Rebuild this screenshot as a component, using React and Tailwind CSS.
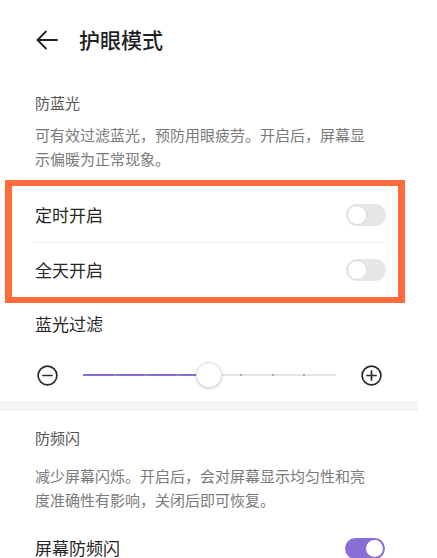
import React from "react";

const font = { fontFamily: '"Noto Sans CJK SC", "Noto Sans", sans-serif' };

function Toggle({ on }) {
  if (on) {
    return (
      <div className="w-[40px] h-[21px] rounded-full bg-[#8a6ed8] flex items-center justify-end pr-[2px]">
        <div className="w-[17px] h-[17px] rounded-full bg-white" />
      </div>
    );
  }
  return (
    <div className="w-[40px] h-[22px] rounded-full bg-[#e6e6e6] flex items-center pl-[1px]">
      <div className="w-[20px] h-[20px] rounded-full bg-white border border-[#dcdcdc]" />
    </div>
  );
}

function Row({ label }) {
  return (
    <div className="flex items-center justify-between h-[54px] pl-[23px] pr-[12px]">
      <span className="text-[17px] text-[#262626]">{label}</span>
      <Toggle />
    </div>
  );
}

export default function App() {
  const ticks = [1, 2, 3, 5, 6, 7];

  return (
    <div className="w-[437px] h-[558px] overflow-hidden bg-white" style={font}>
      <div className="w-[418px]">
        {/* header */}
        <div className="pt-[18px] h-[62px] flex items-center pl-[36px]">
          <svg width="22" height="20" viewBox="0 0 22 20" fill="none" stroke="#222" strokeWidth="1.8" strokeLinecap="round" strokeLinejoin="round">
            <path d="M21 10H1.5" />
            <path d="M10 1.5L1.5 10L10 18.5" />
          </svg>
          <span className="ml-[21px] text-[21px] font-medium text-[#1f1f1f]">护眼模式</span>
        </div>

        {/* 防蓝光 */}
        <div className="px-[35px] mt-[31px]">
          <div className="text-[15px] leading-[20px] text-[#555]">防蓝光</div>
          <div className="mt-[10px] text-[15px] leading-[24px] text-[#7a7a7a]">
            <div>可有效过滤蓝光，预防用眼疲劳。开启后，屏幕显</div>
            <div>示偏暖为正常现象。</div>
          </div>
        </div>

        <div className="mt-[9px] ml-[5px] w-[400px] border-[6px] border-l-[7px] border-r-[7px] border-[#ff6b3b] pt-[2px]">
          <Row label="定时开启" />
          <div className="ml-[21px] mr-[12px] h-px bg-[#ececec]" />
          <Row label="全天开启" />
        </div>

        {/* 蓝光过滤 */}
        <div className="px-[35px] mt-[9px] text-[17px] leading-[24px] text-[#262626]">蓝光过滤</div>

        <div className="mt-[19px] h-[40px] flex items-center pl-[37px]">
          <svg width="21" height="21" viewBox="0 0 21 21" fill="none" stroke="#2a2a2a" strokeWidth="1.7" strokeLinecap="round">
            <circle cx="10.5" cy="10.5" r="9.4" />
            <path d="M6 10.5H15" />
          </svg>
          <div className="relative ml-[25px] w-[253px] h-[26px] flex items-center">
            <div className="w-[126px] h-[2px] bg-[#8a6ed8]" />
            <div className="flex-1 h-[2px] bg-[#e4e4e4]" />
            {ticks.map((t) => (
              <div
                key={t}
                className="absolute top-[12px] w-[2px] h-[2px] rounded-full bg-[#9a9a9a]"
                style={{ left: `${(t * 253) / 8 - 1}px` }}
              />
            ))}
            <div className="absolute left-[113px] top-0 w-[26px] h-[26px] rounded-full bg-white border border-[#e2e2e2] shadow-[0_1px_3px_rgba(0,0,0,0.18)]" />
          </div>
          <svg className="ml-[24px]" width="23" height="21" viewBox="0 0 23 21" fill="none" stroke="#2a2a2a" strokeWidth="1.7" strokeLinecap="round">
            <circle cx="11.5" cy="10.5" r="9.4" />
            <path d="M7 10.5H16M11.5 6V15" />
          </svg>
        </div>

        <div className="mt-[6px] h-[10px] bg-[#f4f4f4]" />

        {/* 防频闪 */}
        <div className="px-[35px] mt-[17px]">
          <div className="text-[15px] leading-[20px] text-[#555]">防频闪</div>
          <div className="mt-[16px] text-[15px] leading-[24px] text-[#7a7a7a]">
            <div>减少屏幕闪烁。开启后，会对屏幕显示均匀性和亮</div>
            <div>度准确性有影响，关闭后即可恢复。</div>
          </div>
        </div>

        <div className="mt-[24px] pl-[35px] pr-[33px] flex items-center justify-between h-[24px]">
          <span className="text-[17px] text-[#262626]">屏幕防频闪</span>
          <Toggle on />
        </div>
      </div>
    </div>
  );
}
